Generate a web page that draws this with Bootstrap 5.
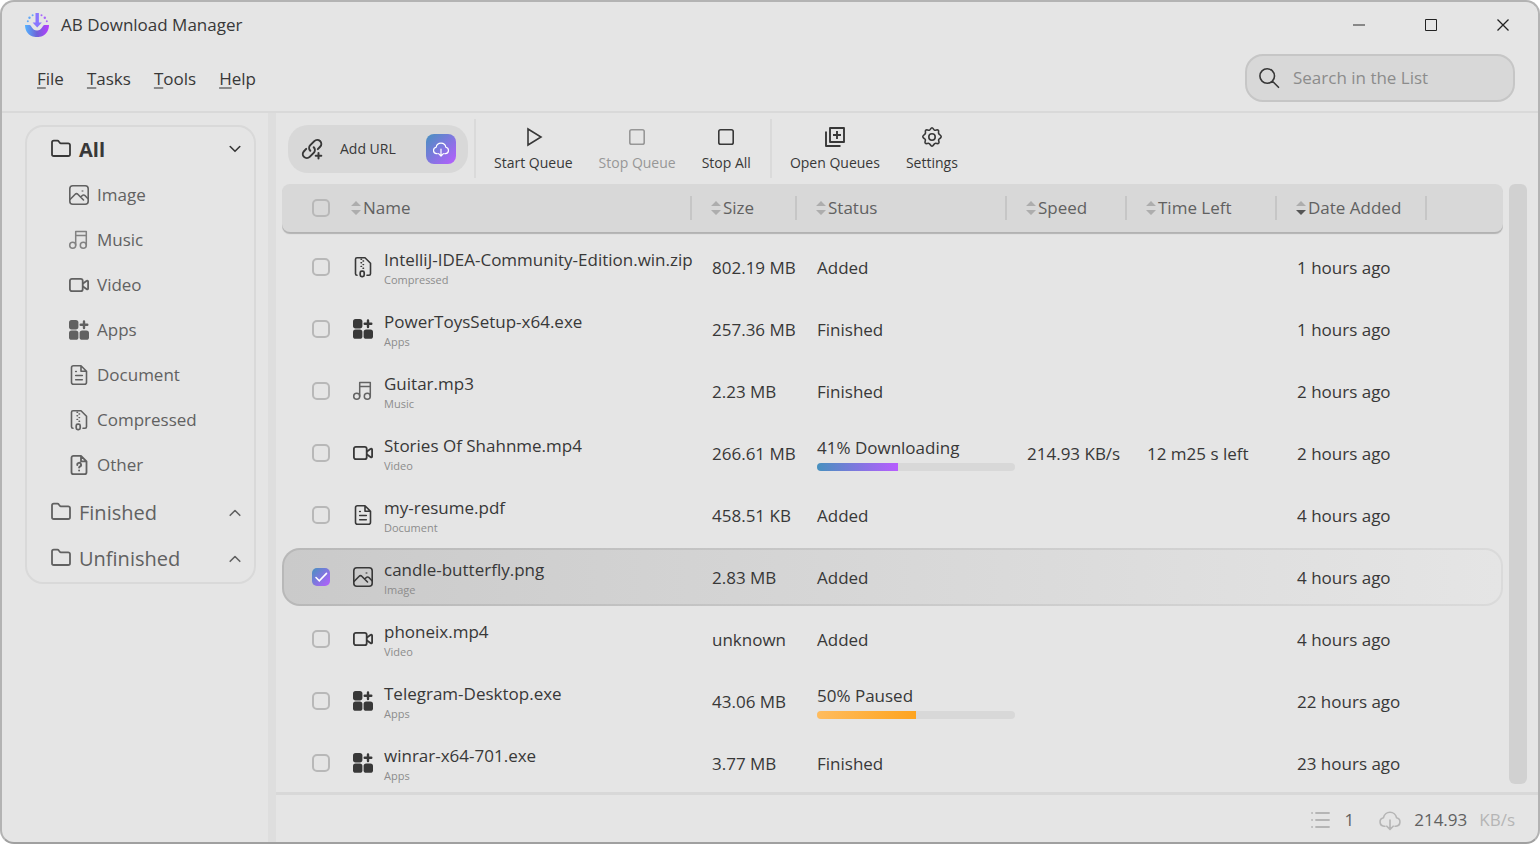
<!DOCTYPE html>
<html lang="en">
<head>
<meta charset="utf-8">
<meta name="viewport" content="width=device-width, initial-scale=1">
<title>AB Download Manager</title>
<link rel="stylesheet" href="https://cdn.jsdelivr.net/npm/bootstrap@5.3.0/dist/css/bootstrap.min.css">
<style>
  :root { --ink:#383838; --ink-soft:#616161; --ink-mute:#8c8c8c; --surface:#e5e5e5; --panel:#d8d8d8; --line:#d9d9d9; --accent:linear-gradient(135deg,#4791bf,#b85dff); }
  body { font-family:"Open Sans","Noto Sans",sans-serif; font-size:17px; line-height:24px; color:var(--ink); background:#fff; }
  button { color:inherit; background:none; border:0; padding:0; }
  .ico { width:24px; height:24px; flex:none; display:block; fill:none; stroke:currentColor; stroke-width:1.8; stroke-linecap:round; stroke-linejoin:round; }
  .window { background:var(--surface); border:2px solid #b3b3b3; border-bottom-color:#a0a0a0; border-radius:14px; overflow:hidden; }
  .titlebar { height:45px; padding-left:23px; }
  .win-btn { width:72px; height:44px; display:grid; place-items:center; }
  .win-btn:last-child { margin-right:-1px; }
  .menubar { height:64px; padding:0 23px; }
  .main-menu { gap:23px; padding-left:12px; }
  .menubar a { color:var(--ink); text-decoration:none; }
  .menubar u { text-decoration-color:#8a8a8a; text-underline-offset:2px; text-decoration-thickness:2px; }
  .top { border-bottom:2px solid var(--line); }
  .search { width:270px; height:48px; border:2px solid #c6c6c6; border-radius:18px; background:var(--panel); padding:0 10px; gap:10px; margin-bottom:2px; }
  .search input { background:none; border:0; outline:0; min-width:0; flex:1; }
  .search input::placeholder { color:var(--ink-mute); opacity:1; }
  .content-row { min-height:0; }
  .sidebar { width:274px; flex:none; padding:12px 12px 0 23px; border-right:8px solid #dedede; }
  .tree { border:2px solid var(--line); border-radius:18px; color:var(--ink-soft); }
  .group-row { width:100%; height:46px; padding:0 7px 0 22px; gap:6px; font-size:20px; text-align:left; }
  .group-row.active { color:var(--ink); font-weight:700; }
  .kinds { margin:-1px 0 3px; padding:0; list-style:none; }
  .kinds a { height:45px; padding-left:40px; gap:6px; color:inherit; text-decoration:none; }
  .toolbar { height:71px; padding:6px 12px; }
  .add-url { height:48px; width:180px; border-radius:20px; background:var(--panel); padding:0 12px; font-size:14px; }
  .cloud-btn { width:30px; height:30px; border-radius:8px; background:var(--accent); color:#fff; display:grid; place-items:center; }
  .cloud-btn .ico { width:18px; height:18px; }
  .tool { padding:2px 13px 0; font-size:14px; line-height:24px; gap:2px; }
  .tool:disabled { color:#979797; }
  .rule { width:2px; height:59px; background:#dadada; margin:0 5px 0 6px; }
  .list-wrap { padding:0 11px 0 6px; gap:6px; min-height:0; }
  .thumb { width:18px; height:600px; max-height:100%; border-radius:6px; background:#d1d1d1; flex:none; }
  .downloads { table-layout:fixed; width:100%; border-spacing:0; border-collapse:separate; }
  .downloads th { height:51px; padding:0 0 3px 19px; font-weight:400; color:var(--ink-soft); }
  .downloads td { height:62px; padding:3px 0 0 20px; white-space:nowrap; }
  .downloads th:first-child, .downloads td:first-child { padding-left:30px; }
  .downloads td:first-child { padding-top:2px; }
  .downloads th:nth-child(2), .downloads td:nth-child(2) { padding-left:0; }
  .downloads thead tr, .downloads .chosen { position:relative; z-index:0; }
  .downloads thead tr th:first-child::before { content:""; position:absolute; inset:0 0 3px; z-index:-1; background:var(--panel); border-radius:8px; box-shadow:0 2px 1px #b2b2b2; }
  .downloads .chosen td:first-child::before { content:""; position:absolute; inset:3px 0 1px; z-index:-1; border:2px solid transparent; border-radius:18px; background:linear-gradient(90deg,#cacaca,#e5e5e5) padding-box,linear-gradient(90deg,#b8b8b8,#dadada) border-box; }
  .col-h { height:24px; border-right:2px solid #c6c6c6; }
  .sort { width:12px; height:16px; margin:0 1px 0 -1px; fill:#adadad; flex:none; }
  .sort .on { fill:#555; }
  .form-check-input { width:18px; height:18px; margin:0; display:block; border:2px solid #b8b8b8; border-radius:5px !important; background-color:transparent; }
  .form-check-input:checked { border:0; background-color:transparent; background-image:url("data:image/svg+xml,%3Csvg xmlns='http://www.w3.org/2000/svg' viewBox='0 0 18 18'%3E%3Cpath d='M4 9.5l3.3 3.3L14.5 5.4' fill='none' stroke='white' stroke-width='1.6' stroke-linecap='round'/%3E%3C/svg%3E"),var(--accent); }
  .file { gap:9px; }
  .file .ico { margin-bottom:2px; }
  .kind-label { font-size:11px; line-height:16px; color:var(--ink-mute); }
  .progress { width:198px; height:8px; margin-top:3px; border-radius:4px; background:var(--panel); }
  .bar-run { background:linear-gradient(90deg,#4791bf,#b85dff); }
  .bar-hold { background:linear-gradient(90deg,#ffbc5e,#fea41f); }
  .statusbar { height:50px; border-top:3px solid #d8d8d8; padding:2px 23px 0; gap:12px; color:var(--ink-soft); }
  .statusbar div { gap:12px; margin-right:12px; }
  .faint { color:#b5b5b5; }
</style>
</head>
<body>
<svg class="position-absolute" width="0" height="0" aria-hidden="true">
  <defs>
    <linearGradient id="bowl" x1="0" y1="0" x2="1" y2="0"><stop offset="0" stop-color="#54b4ff"/><stop offset=".5" stop-color="#6e63d8"/><stop offset="1" stop-color="#b83dff"/></linearGradient>
  </defs>
  <symbol id="folder" viewBox="0 0 24 24"><path d="M3 4.500A1.800 1.800 0 0 1 4.800 2.700H8.500a1.600 1.600 0 0 1 1.300.7l1 1.400a1.400 1.400 0 0 0 1.100.6H19.200A1.800 1.800 0 0 1 21 7.200v9A1.800 1.800 0 0 1 19.200 18H4.800A1.800 1.800 0 0 1 3 16.200z"/></symbol>
  <symbol id="image" viewBox="0 0 24 24"><rect x="2.800" y="2.800" width="18.400" height="18.400" rx="3" stroke-width="1.600"/><path d="M3 16.500l5.200-5.300a1.800 1.800 0 0 1 2.600 0l5.700 5.800M13.800 14l1.500-1.500a1.800 1.800 0 0 1 2.600 0l3.100 3.200" stroke-width="1.600"/><circle cx="15.500" cy="8" r=".5" stroke-width="1.200" opacity=".6"/></symbol>
  <symbol id="music" viewBox="0 0 24 24"><g stroke-width="1.500" opacity=".75"><circle cx="5.700" cy="17.300" r="3"/><circle cx="16.300" cy="17.300" r="3"/><path d="M8.700 17.300V3.500h10.600v13.800M8.700 7.500h10.600"/></g></symbol>
  <symbol id="video" viewBox="0 0 24 24"><rect x="2.900" y="5.800" width="12.800" height="12.400" rx="2"/><path d="M16 10.500l3.800-2.700a.8.8 0 0 1 1.300.7v7a.8.8 0 0 1-1.300.7L16 13.500"/></symbol>
  <symbol id="apps" viewBox="0 0 24 24"><g fill="currentColor" stroke="none"><rect x="2" y="2" width="9.400" height="9.400" rx="2.600"/><rect x="2" y="12.400" width="9.400" height="9.400" rx="2.600"/><rect x="12.600" y="12.400" width="9.400" height="9.400" rx="2.600"/></g><path d="M17 3.500v6.600M13.700 6.800h6.600" stroke-width="2.400"/></symbol>
  <symbol id="document" viewBox="0 0 24 24"><path d="M14 2.800H6.500a2 2 0 0 0-2 2v14.400a2 2 0 0 0 2 2h11a2 2 0 0 0 2-2V8.300zM14 2.800v5.500h5.500M8.700 12.500h6.600M8.700 16.700h6.600M8.700 8.500h.6" stroke-width="1.600"/></symbol>
  <symbol id="zip" viewBox="0 0 24 24"><path d="M6 20.300a1.500 1.500 0 0 1-1.500-1.500V4.300a1.500 1.500 0 0 1 1.500-1.500h8l5.500 5.500v10.500a1.500 1.500 0 0 1-1.500 1.500h-2" stroke-width="1.600"/><path d="M10 4.200h.6M12 6h.6M10 7.800h.6M12 9.600h.6M10 11.400h.6M12 13.200h.6" stroke-width="1.400"/><rect x="9.200" y="16.200" width="4" height="5.400" rx="1.600" stroke-width="1.700"/></symbol>
  <symbol id="unknown" viewBox="0 0 24 24"><path d="M14 2.800H6.500a2 2 0 0 0-2 2v14.400a2 2 0 0 0 2 2h11a2 2 0 0 0 2-2V8.300zM14 2.800v5.500h5.500"/><path d="M10.300 12a1.900 1.900 0 1 1 2.600 1.500c-.6.300-.8.600-.8 1.100M12.100 17.400v.1" stroke-width="1.900"/></symbol>
  <symbol id="down" viewBox="0 0 24 24"><path d="M7.200 8.500L12 13.300l4.800-4.800" stroke-width="1.600"/></symbol>
  <symbol id="up" viewBox="0 0 24 24"><path d="M7.200 14.300L12 9.500l4.800 4.800" stroke-width="1.600"/></symbol>
  <symbol id="cloud" viewBox="0 0 24 24"><path d="M7 18.200H6a4.300 4.300 0 0 1-.5-8.500 6.600 6.600 0 0 1 13 0 4.300 4.300 0 0 1-.5 8.500h-1M12 12v9M8.800 18.200l3.200 3.200 3.200-3.200" stroke-width="1.600"/></symbol>
</svg>

<div class="window vh-100 d-flex flex-column">
  <header class="top">
    <div class="titlebar d-flex align-items-center">
      <svg width="24" height="24" viewBox="0 0 24 24" aria-hidden="true" class="me-2"><path d="M0 12h4.500C6.500 12 7 17.500 12 17.500s5.500-5.500 7.500-5.500H24c0 5-2.500 9-6.500 11-1.500.8-3.500 1-5.500 1s-4-.2-5.500-1C2.500 21 0 17 0 12z" fill="url(#bowl)"/><path d="M10.500 0h3.400v9.500h3L12.200 14.500 7.600 9.500h2.900z" fill="#8a76ff"/><g fill="#62a7f5"><circle cx="2.800" cy="8.300" r="1"/><circle cx="4.500" cy="4.700" r="1.200"/><circle cx="7.600" cy="2.200" r="1"/></g><g fill="#a866fb"><circle cx="16.500" cy="2.200" r="1"/><circle cx="19.800" cy="4.700" r="1.200"/><circle cx="21.800" cy="8.300" r="1"/></g></svg>
      <span class="ms-1 me-auto">AB Download Manager</span>
      <button class="win-btn" type="button" aria-label="Minimize"><svg width="12" height="12"><path d="M0 6h12" stroke="#888" stroke-width="2"/></svg></button>
      <button class="win-btn" type="button" aria-label="Maximize"><svg width="12" height="12"><path d="M.5.5h11v11H.5z" fill="none" stroke="#222"/></svg></button>
      <button class="win-btn" type="button" aria-label="Close"><svg width="12" height="12"><path d="M.5.5l11 11M11.500.5l-11 11" stroke="#222" stroke-width="1.300"/></svg></button>
    </div>
    <div class="menubar d-flex align-items-center justify-content-between">
      <nav class="main-menu d-flex" aria-label="Main menu">
        <a href="#"><u>F</u>ile</a><a href="#"><u>T</u>asks</a><a href="#"><u>T</u>ools</a><a href="#"><u>H</u>elp</a>
      </nav>
      <label class="search d-flex align-items-center">
        <svg class="ico" viewBox="0 0 24 24" aria-hidden="true"><path d="M17.500 10a7.300 7.300 0 1 1-14.600 0 7.300 7.300 0 0 1 14.600 0zM15.500 15.300l6 6" stroke-width="1.600"/></svg>
        <input type="text" placeholder="Search in the List" aria-label="Search in the List">
      </label>
    </div>
  </header>

  <div class="content-row d-flex flex-grow-1">
    <aside class="sidebar">
      <div class="tree">
        <button class="group-row active d-flex align-items-center" type="button"><svg class="ico"><use href="#folder"/></svg><span class="flex-grow-1">All</span><svg class="ico"><use href="#down"/></svg></button>
        <ul class="kinds">
          <li><a href="#" class="d-flex align-items-center"><svg class="ico"><use href="#image"/></svg>Image</a></li>
          <li><a href="#" class="d-flex align-items-center"><svg class="ico"><use href="#music"/></svg>Music</a></li>
          <li><a href="#" class="d-flex align-items-center"><svg class="ico"><use href="#video"/></svg>Video</a></li>
          <li><a href="#" class="d-flex align-items-center"><svg class="ico"><use href="#apps"/></svg>Apps</a></li>
          <li><a href="#" class="d-flex align-items-center"><svg class="ico"><use href="#document"/></svg>Document</a></li>
          <li><a href="#" class="d-flex align-items-center"><svg class="ico"><use href="#zip"/></svg>Compressed</a></li>
          <li><a href="#" class="d-flex align-items-center"><svg class="ico"><use href="#unknown"/></svg>Other</a></li>
        </ul>
        <button class="group-row d-flex align-items-center" type="button"><svg class="ico"><use href="#folder"/></svg><span class="flex-grow-1">Finished</span><svg class="ico"><use href="#up"/></svg></button>
        <button class="group-row d-flex align-items-center" type="button"><svg class="ico"><use href="#folder"/></svg><span class="flex-grow-1">Unfinished</span><svg class="ico"><use href="#up"/></svg></button>
      </div>
    </aside>

    <main class="d-flex flex-column flex-grow-1 overflow-hidden">
      <div class="toolbar d-flex align-items-center flex-shrink-0">
        <div class="add-url d-flex align-items-center justify-content-between">
          <button type="button" class="d-flex align-items-center"><svg class="ico me-3" viewBox="0 0 24 24"><path d="M10.300 13.700a4 4 0 0 1 0-5.600l4-4a4 4 0 0 1 5.800 5.700l-2.300 2.300M13.700 10.300a4 4 0 0 1 0 5.600l-4 4A4 4 0 0 1 4 14.200l2.200-2.300M18.500 16v5.600M15.700 18.800h5.600" stroke-width="2"/></svg>Add URL</button>
          <button type="button" class="cloud-btn" aria-label="Add from clipboard"><svg class="ico"><use href="#cloud"/></svg></button>
        </div>
        <div class="rule"></div>
        <button type="button" class="tool d-flex flex-column align-items-center"><svg class="ico" viewBox="0 0 24 24"><path d="M7 4v16l13-8z" stroke-width="1.600" stroke-linejoin="miter"/></svg>Start Queue</button>
        <button type="button" class="tool d-flex flex-column align-items-center" disabled><svg class="ico" viewBox="0 0 24 24"><rect x="4.800" y="4.800" width="14.400" height="14.400" rx="1.800" stroke-width="1.600"/></svg>Stop Queue</button>
        <button type="button" class="tool d-flex flex-column align-items-center"><svg class="ico" viewBox="0 0 24 24"><rect x="4.800" y="4.800" width="14.400" height="14.400" rx="1.800" stroke-width="1.600"/></svg>Stop All</button>
        <div class="rule"></div>
        <button type="button" class="tool d-flex flex-column align-items-center"><svg class="ico" viewBox="0 0 24 24"><path d="M7 3h14v14H7zM3 6.500V21h14.500M14 6v8M10 10h8" stroke-width="1.900" stroke-linecap="butt"/></svg>Open Queues</button>
        <button type="button" class="tool d-flex flex-column align-items-center"><svg class="ico" viewBox="0 0 24 24"><g stroke-width="1.600"><circle cx="12" cy="12" r="3.200"/><path d="M12 2.800c1.300 0 1.300 2 2.600 2.400 1.300.5 2.500-1 3.600-.1s-.2 2.300.5 3.600c.6 1.200 2.500 1.400 2.500 2.900 0 1.900-1.900 1.600-2.500 2.900-.6 1.300 1.100 2.600 0 3.700s-2.400-.4-3.700.2c-1.300.5-1.500 2.800-3 2.800s-1.700-2.300-3-2.800c-1.300-.6-2.600.9-3.700-.2s.6-2.400 0-3.700c-.6-1.300-2.500-1-2.500-2.900 0-1.500 1.900-1.700 2.500-2.900.7-1.300-.6-2.700.5-3.600s2.300.6 3.600.1C10.700 4.800 10.700 2.800 12 2.800z"/></g></svg>Settings</button>
      </div>

      <div class="list-wrap d-flex flex-grow-1">
        <div class="flex-grow-1 overflow-hidden">
          <table class="downloads">
            <colgroup><col style="width:69px"><col><col style="width:105px"><col style="width:210px"><col style="width:120px"><col style="width:150px"><col style="width:150px"><col style="width:76px"></colgroup>
            <thead>
              <tr>
                <th><input class="form-check-input" type="checkbox" aria-label="Select all"></th>
                <th><div class="col-h d-flex align-items-center"><svg class="sort" viewBox="0 0 12 16"><path d="M6 1l5 5H1zM6 15l5-5H1z"/></svg>Name</div></th>
                <th><div class="col-h d-flex align-items-center"><svg class="sort" viewBox="0 0 12 16"><path d="M6 1l5 5H1zM6 15l5-5H1z"/></svg>Size</div></th>
                <th><div class="col-h d-flex align-items-center"><svg class="sort" viewBox="0 0 12 16"><path d="M6 1l5 5H1zM6 15l5-5H1z"/></svg>Status</div></th>
                <th><div class="col-h d-flex align-items-center"><svg class="sort" viewBox="0 0 12 16"><path d="M6 1l5 5H1zM6 15l5-5H1z"/></svg>Speed</div></th>
                <th><div class="col-h d-flex align-items-center"><svg class="sort" viewBox="0 0 12 16"><path d="M6 1l5 5H1zM6 15l5-5H1z"/></svg>Time Left</div></th>
                <th><div class="col-h d-flex align-items-center"><svg class="sort" viewBox="0 0 12 16"><path d="M6 1l5 5H1z"/><path class="on" d="M6 15l5-5H1z"/></svg>Date Added</div></th>
                <th></th>
              </tr>
            </thead>
            <tbody>
              <tr><td><input class="form-check-input" type="checkbox" aria-label="Select IntelliJ-IDEA-Community-Edition.win.zip"></td><td><div class="file d-flex align-items-center"><svg class="ico"><use href="#zip"/></svg><div><div>IntelliJ-IDEA-Community-Edition.win.zip</div><div class="kind-label">Compressed</div></div></div></td><td>802.19 MB</td><td>Added</td><td></td><td></td><td>1 hours ago</td><td></td></tr>
              <tr><td><input class="form-check-input" type="checkbox" aria-label="Select PowerToysSetup-x64.exe"></td><td><div class="file d-flex align-items-center"><svg class="ico"><use href="#apps"/></svg><div><div>PowerToysSetup-x64.exe</div><div class="kind-label">Apps</div></div></div></td><td>257.36 MB</td><td>Finished</td><td></td><td></td><td>1 hours ago</td><td></td></tr>
              <tr><td><input class="form-check-input" type="checkbox" aria-label="Select Guitar.mp3"></td><td><div class="file d-flex align-items-center"><svg class="ico"><use href="#music"/></svg><div><div>Guitar.mp3</div><div class="kind-label">Music</div></div></div></td><td>2.23 MB</td><td>Finished</td><td></td><td></td><td>2 hours ago</td><td></td></tr>
              <tr><td><input class="form-check-input" type="checkbox" aria-label="Select Stories Of Shahnme.mp4"></td><td><div class="file d-flex align-items-center"><svg class="ico"><use href="#video"/></svg><div><div>Stories Of Shahnme.mp4</div><div class="kind-label">Video</div></div></div></td><td>266.61 MB</td><td><div>41% Downloading</div><div class="progress"><div class="progress-bar bar-run" style="width:41%"></div></div></td><td>214.93 KB/s</td><td>12 m25 s left</td><td>2 hours ago</td><td></td></tr>
              <tr><td><input class="form-check-input" type="checkbox" aria-label="Select my-resume.pdf"></td><td><div class="file d-flex align-items-center"><svg class="ico"><use href="#document"/></svg><div><div>my-resume.pdf</div><div class="kind-label">Document</div></div></div></td><td>458.51 KB</td><td>Added</td><td></td><td></td><td>4 hours ago</td><td></td></tr>
              <tr class="chosen"><td><input class="form-check-input" type="checkbox" checked aria-label="Select candle-butterfly.png"></td><td><div class="file d-flex align-items-center"><svg class="ico"><use href="#image"/></svg><div><div>candle-butterfly.png</div><div class="kind-label">Image</div></div></div></td><td>2.83 MB</td><td>Added</td><td></td><td></td><td>4 hours ago</td><td></td></tr>
              <tr><td><input class="form-check-input" type="checkbox" aria-label="Select phoneix.mp4"></td><td><div class="file d-flex align-items-center"><svg class="ico"><use href="#video"/></svg><div><div>phoneix.mp4</div><div class="kind-label">Video</div></div></div></td><td>unknown</td><td>Added</td><td></td><td></td><td>4 hours ago</td><td></td></tr>
              <tr><td><input class="form-check-input" type="checkbox" aria-label="Select Telegram-Desktop.exe"></td><td><div class="file d-flex align-items-center"><svg class="ico"><use href="#apps"/></svg><div><div>Telegram-Desktop.exe</div><div class="kind-label">Apps</div></div></div></td><td>43.06 MB</td><td><div>50% Paused</div><div class="progress"><div class="progress-bar bar-hold" style="width:50%"></div></div></td><td></td><td></td><td>22 hours ago</td><td></td></tr>
              <tr><td><input class="form-check-input" type="checkbox" aria-label="Select winrar-x64-701.exe"></td><td><div class="file d-flex align-items-center"><svg class="ico"><use href="#apps"/></svg><div><div>winrar-x64-701.exe</div><div class="kind-label">Apps</div></div></div></td><td>3.77 MB</td><td>Finished</td><td></td><td></td><td>23 hours ago</td><td></td></tr>
            </tbody>
          </table>
        </div>
        <div class="thumb"></div>
      </div>

      <footer class="statusbar d-flex align-items-center justify-content-end flex-shrink-0">
        <div class="d-flex align-items-center"><svg class="ico faint" viewBox="0 0 24 24"><path d="M8 5h13M8 12h13M8 19h13M4 5h.1M4 12h.1M4 19h.1" stroke-width="1.800"/></svg>1</div>
        <svg class="ico faint"><use href="#cloud"/></svg>
        <span>214.93</span><span class="faint">KB/s</span>
      </footer>
    </main>
  </div>
</div>
<script src="https://cdn.jsdelivr.net/npm/bootstrap@5.3.0/dist/js/bootstrap.bundle.min.js"></script>
</body>
</html>
